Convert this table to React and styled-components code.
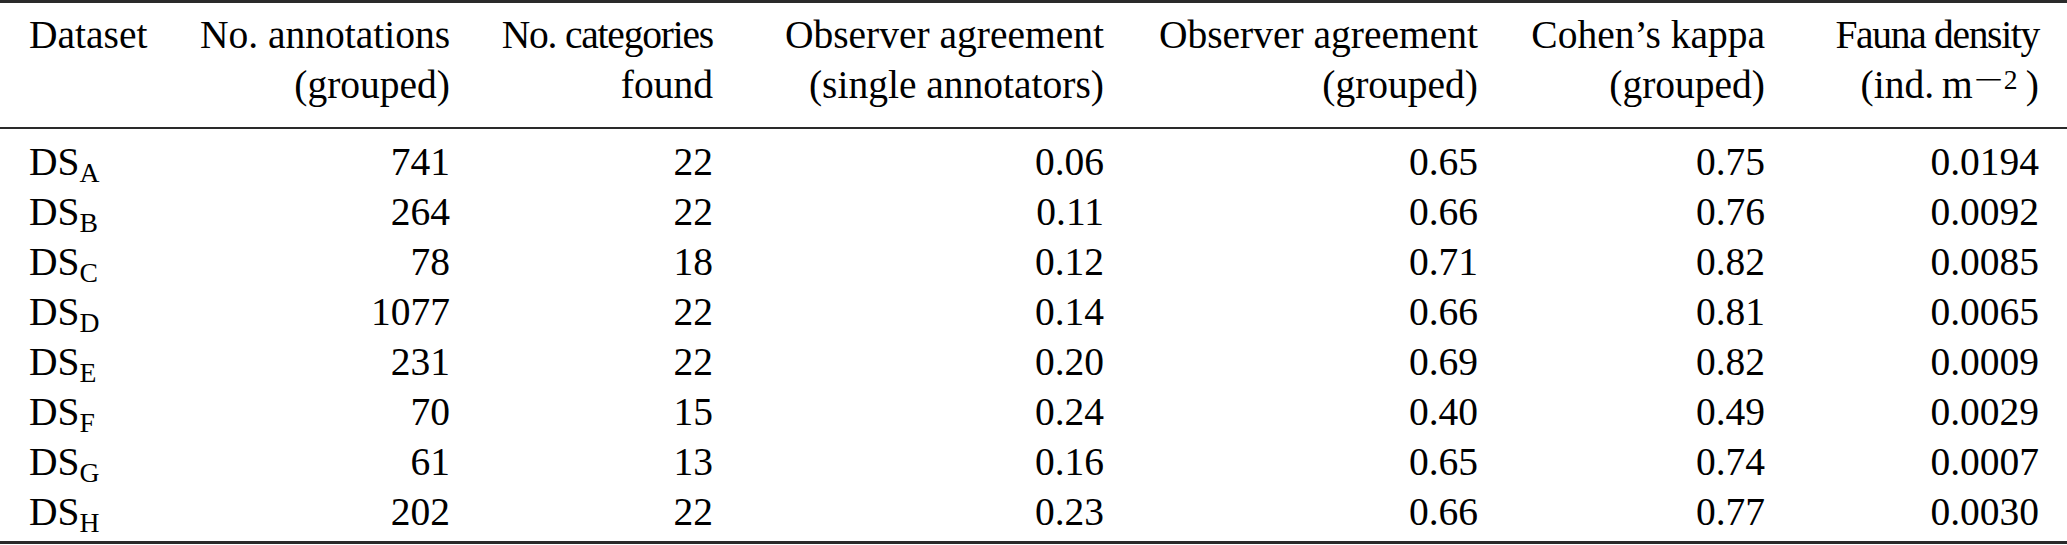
import styled, { createGlobalStyle, css } from 'styled-components';

const GlobalStyle = createGlobalStyle`
    html, body {
        margin: 0;
        padding: 0;
        background: #ffffff;
    }
    body {
        font-family: "Liberation Serif", "Times New Roman", serif;
        color: #000000;
    }
`;

const columnGrid = css`
    display: grid;
    grid-template-columns: 171px 250px 263px 391px 374px 287px 274px;
    padding: 0 28px 0 29px;
`;

const Table = styled.div`
    width: 2067px;
    border-top: 3px solid #2a2a2a;
    border-bottom: 3px solid #2a2a2a;
    font-size: 39.5px;
    line-height: 50px;
`;

const Head = styled.div`
    ${columnGrid}
    padding-top: 7px;
    padding-bottom: 17px;
    border-bottom: 2px solid #2a2a2a;
`;

const Body = styled.div`
    padding: 8px 0 4px;
`;

const Row = styled.div`
    ${columnGrid}
`;

const Cell = styled.div`
    text-align: ${(props) => (props.$left ? 'left' : 'right')};
    white-space: nowrap;
`;

const Tight = styled.span`
    letter-spacing: ${(props) => props.$tracking}px;
`;

const Sub = styled.span`
    font-size: 0.7em;
    vertical-align: -0.25em;
    line-height: 0;
`;

const Sup = styled.span`
    font-size: 0.7em;
    vertical-align: 0.34em;
    line-height: 0;
    margin-right: 0.3em;
`;

const Minus = styled.span`
    display: inline-block;
    transform: scaleX(1.9);
    margin: 0 0.26em 0 0.3em;
`;

const headers = [
    { lines: ['No. annotations', '(grouped)'] },
    { lines: ['No. categories', 'found'], tracking: -1.2 },
    { lines: ['Observer agreement', '(single annotators)'] },
    { lines: ['Observer agreement', '(grouped)'] },
    { lines: ['Cohen\u2019s kappa', '(grouped)'] },
];

const rows = [
    ['A', '741', '22', '0.06', '0.65', '0.75', '0.0194'],
    ['B', '264', '22', '0.11', '0.66', '0.76', '0.0092'],
    ['C', '78', '18', '0.12', '0.71', '0.82', '0.0085'],
    ['D', '1077', '22', '0.14', '0.66', '0.81', '0.0065'],
    ['E', '231', '22', '0.20', '0.69', '0.82', '0.0009'],
    ['F', '70', '15', '0.24', '0.40', '0.49', '0.0029'],
    ['G', '61', '13', '0.16', '0.65', '0.74', '0.0007'],
    ['H', '202', '22', '0.23', '0.66', '0.77', '0.0030'],
];

export default function App() {
    return (
        <>
            <GlobalStyle />
            <Table>
                <Head>
                    <Cell $left>Dataset</Cell>
                    {headers.map(({ lines, tracking }, i) => (
                        <Cell key={i}>
                            {tracking ? <Tight $tracking={tracking}>{lines[0]}</Tight> : lines[0]}
                            <br />
                            {lines[1]}
                        </Cell>
                    ))}
                    <Cell>
                        <Tight $tracking={-1.3}>Fauna density</Tight>
                        <br />
                        (ind.{'\u2009'}m
                        <Sup>
                            <Minus>{'\u2212'}</Minus>2
                        </Sup>
                        )
                    </Cell>
                </Head>
                <Body>
                    {rows.map(([letter, ...values]) => (
                        <Row key={letter}>
                            <Cell $left>
                                DS<Sub>{letter}</Sub>
                            </Cell>
                            {values.map((value, i) => (
                                <Cell key={i}>{value}</Cell>
                            ))}
                        </Row>
                    ))}
                </Body>
            </Table>
        </>
    );
}
